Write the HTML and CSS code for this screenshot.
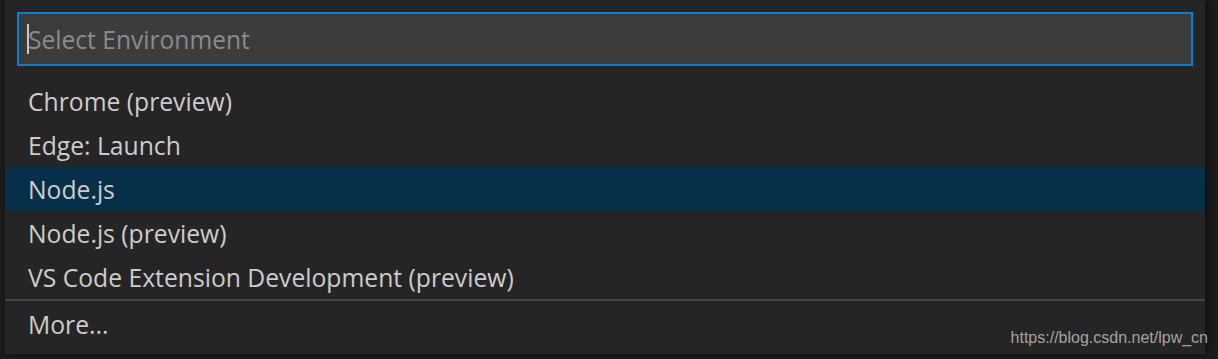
FILE: index.html
```html
<!DOCTYPE html>
<html lang="en">
<head>
    <meta charset="UTF-8">
    <title>Select Environment</title>
    <link rel="stylesheet" href="styles.css">
</head>
<body>
    <div class="quick-pick">
        <div class="input-box">
            <span class="cursor"></span>
            <span class="placeholder">Select Environment</span>
        </div>
        <ul class="list">
            <li class="item">Chrome (preview)</li>
            <li class="item">Edge: Launch</li>
            <li class="item focused">Node.js</li>
            <li class="item">Node.js (preview)</li>
            <li class="item">VS Code Extension Development (preview)</li>
            <li class="item separated">More...</li>
        </ul>
    </div>
    <div class="watermark">https://blog.csdn.net/lpw_cn</div>
</body>
</html>
```

FILE: styles.css
```css
body {
    margin: 0;
    background-color: #1c1c1c;
    font-family: "Open Sans", "Noto Sans", sans-serif;
    width: 1218px;
    height: 359px;
    overflow: hidden;
    position: relative;
}

.quick-pick {
    margin-left: 5px;
    width: 1200px;
    height: 354px;
    background-color: #252526;
    padding-top: 12px;
    box-sizing: border-box;
    box-shadow: 2px 0 8px rgba(0, 0, 0, 0.5);
}

.input-box {
    margin: 0 12px;
    height: 54px;
    border: 2px solid #0a7fd0;
    background-color: #3c3c3c;
    box-sizing: border-box;
    display: flex;
    align-items: center;
    padding-left: 8px;
}

.cursor {
    width: 2px;
    height: 30px;
    background-color: #c8c8c8;
    margin-right: -1px;
}

.placeholder {
    color: #8b8b8b;
    font-size: 24.6px;
}

.list {
    list-style: none;
    margin: 13px 0 0 0;
    padding: 0;
}

.item {
    height: 43px;
    padding-top: 1px;
    line-height: 44px;
    padding-left: 23px;
    color: #cccccc;
    font-size: 24.7px;
}

.focused {
    background-color: #062f4a;
}

.separated {
    border-top: 2px solid #454545;
    line-height: 46px;
}

.watermark {
    position: absolute;
    right: 10px;
    top: 329px;
    font-family: "Liberation Sans", Arial, sans-serif;
    font-size: 16px;
    color: #a3a3a3;
}
```
